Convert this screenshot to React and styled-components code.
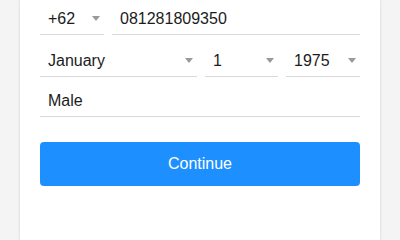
import React from "react";
import styled, { createGlobalStyle } from "styled-components";

const Global = createGlobalStyle`
  html, body {
    margin: 0;
    padding: 0;
    background: #f4f4f4;
    font-family: "Liberation Sans", Arial, Helvetica, sans-serif;
  }
  * { box-sizing: border-box; }
`;

const Card = styled.div`
  margin: 0 20px;
  min-height: 100vh;
  background: #ffffff;
  box-shadow: 0 0 3px rgba(0, 0, 0, 0.14);
  padding: 3px 20px 0;
  display: flex;
  flex-direction: column;
`;

const Row = styled.div`
  display: grid;
  grid-template-columns: ${(p) => p.$cols};
  column-gap: 8px;
  margin-bottom: ${(p) => p.$after}px;
`;

const Field = styled.div`
  height: 32px;
  border-bottom: 1px solid #d9d9dc;
  display: flex;
  align-items: flex-end;
  justify-content: space-between;
  padding: 0 4px 5px 8px;
  font-size: 16px;
  line-height: 20px;
  color: #1c1c1c;
`;

const Value = styled.span`
  white-space: nowrap;
`;

const Caret = styled.span`
  width: 0;
  height: 0;
  border-left: 4px solid transparent;
  border-right: 4px solid transparent;
  border-top: 5px solid #999999;
  margin-bottom: 8px;
`;

const Button = styled.button`
  height: 44px;
  flex: none;
  border: none;
  border-radius: 4px;
  background: #1e8ffe;
  color: #ffffff;
  font-family: inherit;
  font-size: 16px;
  padding: 0;
  cursor: pointer;
`;

const Select = ({ value }) => (
  <Field>
    <Value>{value}</Value>
    <Caret />
  </Field>
);

const Input = ({ value }) => (
  <Field>
    <Value>{value}</Value>
  </Field>
);

export default function App() {
  return (
    <>
      <Global />
      <Card>
        <Row $cols="64px 1fr" $after={10}>
          <Select value="+62" />
          <Input value="081281809350" />
        </Row>
        <Row $cols="157px 73px 1fr" $after={8}>
          <Select value="January" />
          <Select value="1" />
          <Select value="1975" />
        </Row>
        <Row $cols="1fr" $after={25}>
          <Input value="Male" />
        </Row>
        <Button>Continue</Button>
      </Card>
    </>
  );
}
